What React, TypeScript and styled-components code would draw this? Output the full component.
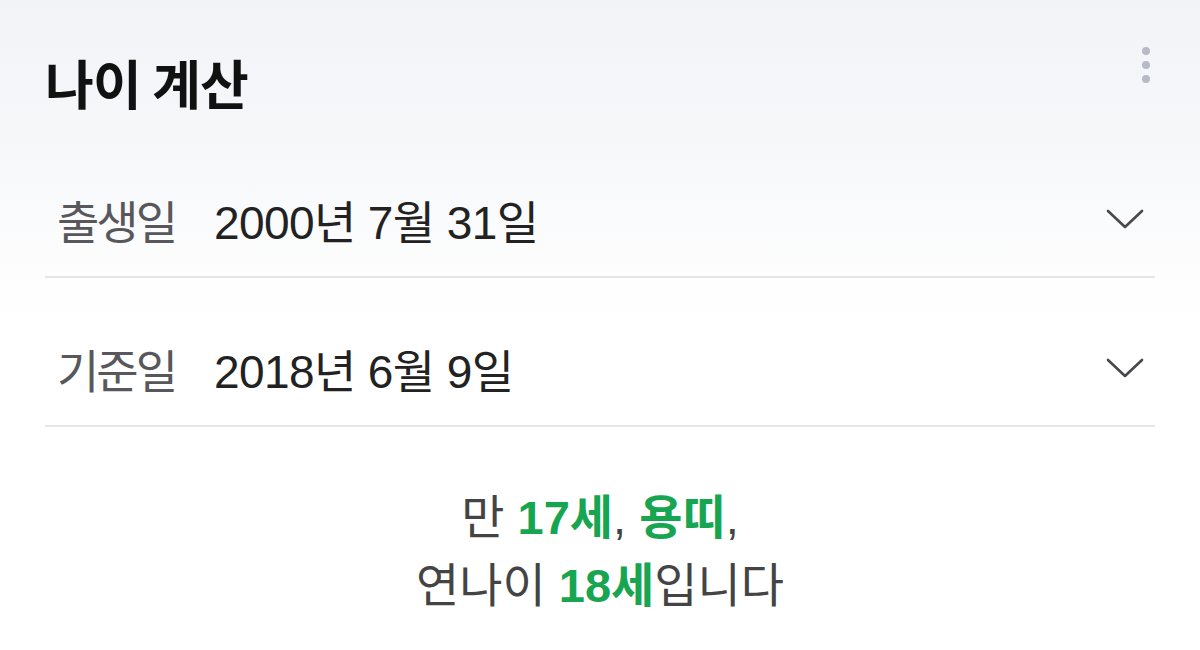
import React from "react";
import styled, { createGlobalStyle } from "styled-components";

const Global = createGlobalStyle`
  html, body { margin: 0; padding: 0; }
  body {
    width: 1200px;
    height: 650px;
    overflow: hidden;
    background: linear-gradient(180deg, #f2f3f7 0px, #f7f8fa 150px, #ffffff 320px);
    font-family: "Liberation Sans", "Noto Sans CJK KR", sans-serif;
  }
`;

const Page = styled.div`
  display: flex;
  flex-direction: column;
  padding: 0 45px;
`;

const Header = styled.header`
  display: flex;
  justify-content: space-between;
  align-items: flex-start;
  padding-top: 47px;
  height: 129px;
  box-sizing: border-box;
`;

const Title = styled.h1`
  margin: 0;
  font-family: "Noto Sans CJK KR", sans-serif;
  font-size: 53px;
  line-height: 70px;
  font-weight: 700;
  color: #111;
  letter-spacing: -0.8px;
`;

const MoreButton = styled.button`
  border: 0;
  background: none;
  padding: 0;
  margin-right: 1px;
  display: flex;
  flex-direction: column;
  gap: 6px;
  width: 16px;
  align-items: center;
`;

const Dot = styled.span`
  width: 8px;
  height: 8px;
  border-radius: 50%;
  background: #b7bbc7;
`;

const Row = styled.div`
  display: flex;
  align-items: center;
  height: 149px;
  box-sizing: border-box;
  padding: 32px 0 0 12px;
  border-bottom: 2px solid #e5e5ea;
`;

const Label = styled.span`
  font-family: "Noto Sans CJK KR", sans-serif;
  font-size: 46px;
  color: #58585c;
  width: 157px;
  letter-spacing: -3px;
`;

const Value = styled.span`
  flex: 1;
  font-size: 46px;
  color: #222;
  letter-spacing: -0.6px;
`;

const Chevron = styled.svg`
  width: 40px;
  height: 24px;
  margin-right: 10px;
`;

const Result = styled.div`
  text-align: center;
  font-size: 47px;
  line-height: 68px;
  color: #444;
  padding-top: 57px;
  letter-spacing: 0;
`;

const Em = styled.strong`
  color: #17a552;
  font-weight: 700;
`;

const ChevronIcon = () => (
  <Chevron viewBox="0 0 40 24">
    <polyline
      points="3,4 20,20 37,4"
      fill="none"
      stroke="#48484c"
      strokeWidth="2.6"
      strokeLinecap="round"
      strokeLinejoin="round"
    />
  </Chevron>
);

export default function App() {
  return (
    <>
      <Global />
      <Page>
        <Header>
          <Title>나이 계산</Title>
          <MoreButton aria-label="more">
            <Dot />
            <Dot />
            <Dot />
          </MoreButton>
        </Header>
        <Row>
          <Label>출생일</Label>
          <Value>2000년 7월 31일</Value>
          <ChevronIcon />
        </Row>
        <Row>
          <Label>기준일</Label>
          <Value>2018년 6월 9일</Value>
          <ChevronIcon />
        </Row>
        <Result>
          만 <Em>17세</Em>, <Em>용띠</Em>,
          <br />
          연나이 <Em>18세</Em>입니다
        </Result>
      </Page>
    </>
  );
}
